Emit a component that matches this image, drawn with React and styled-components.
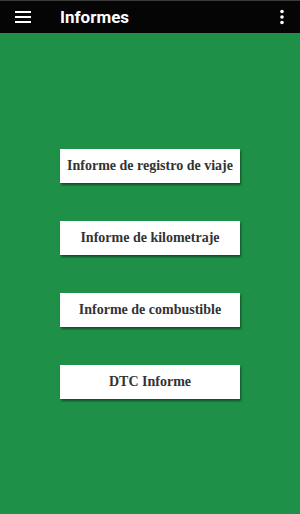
import React from "react";
import styled, { createGlobalStyle } from "styled-components";

const GlobalStyle = createGlobalStyle`
    html, body {
        margin: 0;
        padding: 0;
        background: #1e9048;
    }
    body {
        font-family: Roboto, "Liberation Sans", sans-serif;
    }
`;

const reports = [
    "Informe de registro de viaje",
    "Informe de kilometraje",
    "Informe de combustible",
    "DTC Informe",
];

function App() {
    return (
        <>
            <GlobalStyle />
            <Screen>
                <TopBar>
                    <MenuButton aria-label="menu">
                        <svg width="18" height="14" viewBox="0 0 18 14">
                            <rect x="1" y="1" width="16" height="2" fill="#fff" />
                            <rect x="1" y="6" width="16" height="2" fill="#fff" />
                            <rect x="1" y="11" width="16" height="2" fill="#fff" />
                        </svg>
                    </MenuButton>
                    <Title>Informes</Title>
                    <MoreButton aria-label="more">
                        <svg width="6" height="16" viewBox="0 0 6 16">
                            <circle cx="3" cy="2.5" r="1.8" fill="#fff" />
                            <circle cx="3" cy="8" r="1.8" fill="#fff" />
                            <circle cx="3" cy="13.5" r="1.8" fill="#fff" />
                        </svg>
                    </MoreButton>
                </TopBar>
                <Content>
                    {reports.map((r) => (
                        <ReportButton key={r}>{r}</ReportButton>
                    ))}
                </Content>
            </Screen>
        </>
    );
}

export default App;

const Screen = styled.div`
    width: 300px;
    height: 514px;
    background: #1e9048;
    display: flex;
    flex-direction: column;
`;

const TopBar = styled.div`
    height: 32px;
    background: #050505;
    border-top: 1px solid #3a3a3a;
    display: flex;
    align-items: center;
    padding: 0 10px 0 14px;
`;

const MenuButton = styled.div`
    width: 18px;
    height: 14px;
    display: flex;
`;

const Title = styled.div`
    color: #fff;
    font-family: Roboto, "Liberation Sans", sans-serif;
    font-weight: 700;
    font-size: 17px;
    margin-left: 28px;
    flex: 1;
`;

const MoreButton = styled.div`
    width: 6px;
    height: 16px;
    display: flex;
    margin-right: 5px;
`;

const Content = styled.div`
    display: flex;
    flex-direction: column;
    align-items: center;
    gap: 38px;
    padding-top: 116px;
`;

const ReportButton = styled.div`
    width: 180px;
    height: 34px;
    box-sizing: border-box;
    background: #fff;
    display: flex;
    align-items: center;
    justify-content: center;
    font-family: "Liberation Serif", "DejaVu Serif", serif;
    font-weight: 700;
    font-size: 14px;
    color: #333;
    box-shadow: 1px 2px 2px rgba(0, 0, 0, 0.45);
    cursor: pointer;
`;
